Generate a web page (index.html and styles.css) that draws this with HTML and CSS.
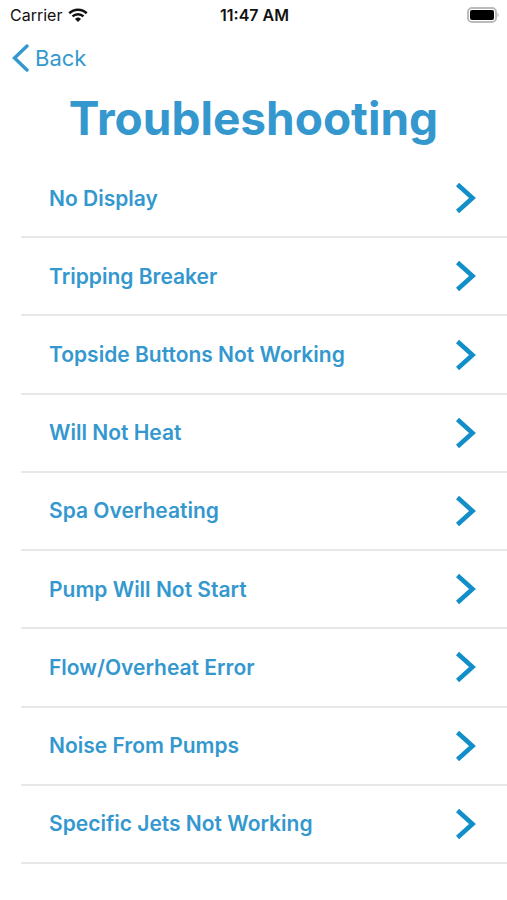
FILE: index.html
```html
<!DOCTYPE html>
<html lang="en">
<head>
<meta charset="utf-8">
<meta name="viewport" content="width=device-width, initial-scale=1">
<title>Troubleshooting</title>
<link rel="stylesheet" href="styles.css">
</head>
<body>
<svg class="symbols" aria-hidden="true">
  <symbol id="chevron" viewBox="0 0 20 32">
    <path d="M1.500 2.500 L16.500 16 L1.500 29.500" fill="none" stroke="currentColor" stroke-width="4.600"/>
  </symbol>
</svg>
<div class="app">
  <div class="status">
    <div class="carrier">
      <span>Carrier</span>
      <svg class="wifi" viewBox="0 0 20 14" aria-hidden="true">
        <path d="M1.300 5.200 A12.500 12.500 0 0 1 18.700 5.200" fill="none" stroke="currentColor" stroke-width="2.600"/>
        <path d="M4.500 8.400 A8 8 0 0 1 15.500 8.400" fill="none" stroke="currentColor" stroke-width="2.400"/>
        <path d="M7 10.900 A4.300 4.300 0 0 1 13 10.900 L10 14 Z" fill="currentColor"/>
      </svg>
    </div>
    <span class="time">11:47 AM</span>
    <svg class="battery" viewBox="0 0 33 17" aria-hidden="true">
      <rect x="2" y="1" width="28" height="14" rx="4" fill="none" stroke="#bbb" stroke-width="2"/>
      <rect x="4" y="3" width="24" height="10" rx="2" fill="#000"/>
      <path d="M31.500 5.500 Q34 8 31.500 10.500 Z" fill="#bbb"/>
    </svg>
  </div>
  <nav class="nav">
    <a class="back" href="#">
      <svg class="back-icon" viewBox="0 0 18 28" aria-hidden="true">
        <path d="M15 2 L2.500 14 L15 26" fill="none" stroke="currentColor" stroke-width="3.400" stroke-linecap="round"/>
      </svg>
      <span>Back</span>
    </a>
  </nav>
  <h1 class="title">Troubleshooting</h1>
  <ul class="list">
    <li class="item"><a class="link" href="#">No Display<svg class="chevron" aria-hidden="true"><use href="#chevron"/></svg></a></li>
    <li class="item"><a class="link" href="#">Tripping Breaker<svg class="chevron" aria-hidden="true"><use href="#chevron"/></svg></a></li>
    <li class="item"><a class="link" href="#">Topside Buttons Not Working<svg class="chevron" aria-hidden="true"><use href="#chevron"/></svg></a></li>
    <li class="item"><a class="link" href="#">Will Not Heat<svg class="chevron" aria-hidden="true"><use href="#chevron"/></svg></a></li>
    <li class="item"><a class="link" href="#">Spa Overheating<svg class="chevron" aria-hidden="true"><use href="#chevron"/></svg></a></li>
    <li class="item"><a class="link" href="#">Pump Will Not Start<svg class="chevron" aria-hidden="true"><use href="#chevron"/></svg></a></li>
    <li class="item"><a class="link" href="#">Flow/Overheat Error<svg class="chevron" aria-hidden="true"><use href="#chevron"/></svg></a></li>
    <li class="item"><a class="link" href="#">Noise From Pumps<svg class="chevron" aria-hidden="true"><use href="#chevron"/></svg></a></li>
    <li class="item"><a class="link" href="#">Specific Jets Not Working<svg class="chevron" aria-hidden="true"><use href="#chevron"/></svg></a></li>
  </ul>
</div>
</body>
</html>
```
FILE: styles.css
```css
* {
  box-sizing: border-box;
}

body {
  margin: 0;
  background: #fff;
  color: #3498cf;
  font-family: Inter, "Liberation Sans", sans-serif;
}

a {
  color: inherit;
  text-decoration: none;
}

.symbols {
  display: none;
}

.app {
  display: flex;
  flex-direction: column;
  min-height: 100vh;
}

.status {
  display: grid;
  grid-template-columns: 1fr auto 1fr;
  align-items: center;
  height: 30px;
  padding: 0 8px 0 10px;
  color: #111;
  font-size: 16px;
}

.carrier {
  display: flex;
  align-items: center;
  gap: 6px;
}

.wifi {
  width: 20px;
  height: 14px;
}

.time {
  font-weight: 600;
}

.battery {
  justify-self: end;
  width: 33px;
  height: 17px;
}

.nav {
  display: flex;
  align-items: center;
  height: 56px;
  padding-left: 12px;
}

.back {
  display: flex;
  align-items: center;
  gap: 5px;
  font-size: 22px;
}

.back-icon {
  width: 18px;
  height: 28px;
}

.title {
  margin: 0;
  font-size: 46px;
  line-height: 64px;
  font-weight: 700;
  text-align: center;
}

.list {
  display: grid;
  flex: 1;
  grid-auto-rows: 1fr;
  margin: 0;
  padding: 10px 0 36px 21px;
  list-style: none;
}

.item {
  display: grid;
  border-bottom: 2px solid #e8e8ea;
}

.link {
  display: flex;
  align-items: center;
  justify-content: space-between;
  padding: 0 31px 0 28px;
  font-size: 21px;
  font-weight: 600;
}

.chevron {
  width: 20px;
  height: 32px;
  color: #128fc9;
}
```
